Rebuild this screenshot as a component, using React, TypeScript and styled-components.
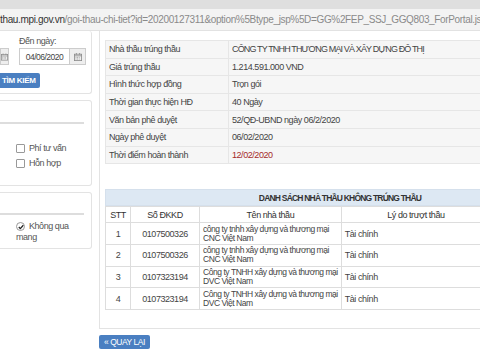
import React from "react";
import styled, { createGlobalStyle } from "styled-components";

const Global = createGlobalStyle`
  html, body { margin: 0; padding: 0; background: #fff; overflow: hidden; }
  body {
    width: 480px; height: 360px;
    font-family: "Liberation Sans", Arial, sans-serif;
    font-size: 9px;
    letter-spacing: -0.45px;
    color: #444;
  }
  * { box-sizing: border-box; }
`;

const Chrome = styled.div`
  height: 9px;
  background: #dfdfdf;
`;

const UrlBar = styled.div`
  height: 22px;
  background: #f3f3f3;
  border-bottom: 1px solid #e2e2e2;
  display: flex;
  align-items: center;
  white-space: nowrap;
  overflow: hidden;
  font-size: 10px;
  letter-spacing: -0.35px;
  color: #8a8a8a;
`;

const Host = styled.span`
  color: #333;
`;

const Page = styled.div`
  display: flex;
  gap: 7px;
  align-items: flex-start;
`;

const LeftCol = styled.div`
  width: 92px;
  flex: none;
  display: flex;
  flex-direction: column;
  gap: 6px;
`;

const Panel = styled.div<{ $h: number }>`
  height: ${(p) => p.$h}px;
  background: #fff;
  border: 1px solid #e3e3e3;
  border-left: none;
  border-radius: 0 3px 3px 0;
`;

const SearchPanel = styled(Panel)`
  border-top: none;
  padding-top: 4px;
`;

const FieldLabel = styled.div`
  color: #555;
  margin-left: 19px;
  height: 13px;
  line-height: 13px;
`;

const InputRow = styled.div`
  display: flex;
  height: 17px;
`;

const Addon = styled.div<{ $w: number }>`
  width: ${(p) => p.$w}px;
  height: 17px;
  background: #eee;
  border: 1px solid #ccc;
  display: flex;
  align-items: center;
  justify-content: center;
`;

const DateInput = styled.div`
  width: 50px;
  height: 17px;
  margin-left: 10px;
  border: 1px solid #ccc;
  border-right: none;
  font-size: 8.5px;
  letter-spacing: -0.5px;
  color: #444;
  display: flex;
  align-items: center;
  justify-content: center;
  background: #fff;
`;

const SearchButton = styled.div`
  margin-top: 8px;
  width: 40px;
  height: 15px;
  background: #4a7fc1;
  color: #fff;
  font-size: 8px;
  font-weight: bold;
  letter-spacing: -0.3px;
  display: flex;
  align-items: center;
  padding-left: 2px;
  white-space: nowrap;
  border-radius: 0 2px 2px 0;
`;

const Rule = styled.div<{ $top: number }>`
  margin-top: ${(p) => p.$top}px;
  width: 84px;
  height: 2px;
  background: #ddd;
`;

const CheckList = styled.div<{ $top: number }>`
  margin-top: ${(p) => p.$top}px;
  margin-left: 16px;
  display: flex;
  flex-direction: column;
  gap: 4px;
`;

const CheckRow = styled.div`
  display: flex;
  align-items: center;
  gap: 4px;
  color: #555;
  line-height: 11px;
  white-space: nowrap;
`;

const Box = styled.span`
  width: 9px;
  height: 9px;
  border: 1px solid #999;
  border-radius: 1px;
  background: #fff;
  flex: none;
`;

const Round = styled.span`
  width: 9px;
  height: 9px;
  border: 1px solid #999;
  border-radius: 50%;
  background: #fff;
  flex: none;
  display: flex;
  align-items: center;
  justify-content: center;
`;

const Wrap = styled.div`
  color: #555;
  line-height: 11px;
`;

const RightCol = styled.div`
  width: 480px;
  flex: none;
  display: flex;
  flex-direction: column;
`;

const RightPanel = styled.div`
  height: 298px;
  border: 1px solid #e3e3e3;
  border-top: none;
  background: #fff;
  padding: 9px 0 0 5px;
`;

const InfoTable = styled.table`
  width: 386px;
  border-collapse: collapse;
  color: #444;
  td {
    height: 17.6px;
    padding: 0 3px;
    background: #f6f6f6;
    border-top: 1px solid #e6e6e6;
    border-left: 1px solid #e6e6e6;
    border-bottom: 1px solid #e6e6e6;
    white-space: nowrap;
  }
  td:first-child { width: 123px; }
`;

const Caps = styled.span`
  letter-spacing: -0.85px;
`;

const Red = styled.span`
  color: #a52a2a;
`;

const ListTitle = styled.div`
  margin-top: 25px;
  width: 470px;
  height: 17px;
  background: #dde8f3;
  border: 1px solid #d5e0ec;
  font-size: 8.5px;
  font-weight: bold;
  letter-spacing: -0.8px;
  color: #333;
  display: flex;
  align-items: center;
  justify-content: center;
`;

const ListTable = styled.table`
  width: 386px;
  border-collapse: collapse;
  color: #444;
  th {
    height: 16px;
    font-weight: normal;
    border: 1px solid #ddd;
    text-align: center;
    color: #333;
  }
  td {
    height: 21.7px;
    border: 1px solid #ddd;
    padding: 0 3px;
    white-space: nowrap;
  }
`;

const NameCell = styled.td`
  font-size: 8.5px;
  line-height: 9px;
`;

const Center = styled.td`
  text-align: center;
`;

const BackButton = styled.div`
  margin-top: 6px;
  width: 51px;
  height: 14px;
  background: #4a7fc1;
  color: #fff;
  font-size: 8.5px;
  border-radius: 2px;
  display: flex;
  align-items: center;
  justify-content: center;
  white-space: nowrap;
  letter-spacing: -0.45px;
`;

const Cal = () => (
  <svg width="8" height="8" viewBox="0 0 10 10" fill="none" stroke="#888" strokeWidth="1">
    <rect x="0.5" y="1.5" width="9" height="8" />
    <line x1="0.5" y1="3.5" x2="9.5" y2="3.5" />
    <line x1="3" y1="0" x2="3" y2="2" />
    <line x1="7" y1="0" x2="7" y2="2" />
    <line x1="2" y1="5.5" x2="8" y2="5.5" strokeDasharray="1 1" />
    <line x1="2" y1="7.5" x2="8" y2="7.5" strokeDasharray="1 1" />
  </svg>
);

const Tick = () => (
  <svg width="6" height="6" viewBox="0 0 6 6" fill="none" stroke="#222" strokeWidth="1.3">
    <polyline points="0.8,3 2.3,4.6 5.3,1.2" />
  </svg>
);

const info: [string, React.ReactNode][] = [
  ["Nhà thầu trúng thầu", <Caps>CÔNG TY TNHH THƯƠNG MẠI VÀ XÂY DỰNG ĐÔ THỊ</Caps>],
  ["Giá trúng thầu", "1.214.591.000 VND"],
  ["Hình thức hợp đồng", "Trọn gói"],
  ["Thời gian thực hiện HĐ", "40 Ngày"],
  ["Văn bản phê duyệt", "52/QĐ-UBND ngày 06/2/2020"],
  ["Ngày phê duyệt", "06/02/2020"],
  ["Thời điểm hoàn thành", <Red>12/02/2020</Red>],
];

const rows = [
  ["1", "0107500326", "công ty tnhh xây dựng và thương mại", "CNC Việt Nam"],
  ["2", "0107500326", "công ty tnhh xây dựng và thương mại", "CNC Việt Nam"],
  ["3", "0107323194", "Công ty TNHH xây dựng và thương mại", "DVC Việt Nam"],
  ["4", "0107323194", "Công ty TNHH xây dựng và thương mại", "DVC Việt Nam"],
];

export default function App() {
  return (
    <>
      <Global />
      <Chrome />
      <UrlBar>
        <Host>thau.mpi.gov.vn</Host>/goi-thau-chi-tiet?id=20200127311&amp;option%5Btype_jsp%5D=GG%2FEP_SSJ_GGQ803_ForPortal.jsp&amp;option%5Bid%5D=
      </UrlBar>
      <Page>
        <LeftCol>
          <SearchPanel $h={63}>
            <FieldLabel>Đến ngày:</FieldLabel>
            <InputRow>
              <Addon $w={9}><Cal /></Addon>
              <DateInput>04/06/2020</DateInput>
              <Addon $w={17}><Cal /></Addon>
            </InputRow>
            <SearchButton>TÌM KIẾM</SearchButton>
          </SearchPanel>
          <Panel $h={86}>
            <Rule $top={21} />
            <CheckList $top={19}>
              <CheckRow><Box />Phí tư vấn</CheckRow>
              <CheckRow><Box />Hỗn hợp</CheckRow>
            </CheckList>
          </Panel>
          <Panel $h={57}>
            <Rule $top={20} />
            <CheckList $top={6}>
              <Wrap>
                <CheckRow><Round><Tick /></Round>Không qua</CheckRow>
                <span>mang</span>
              </Wrap>
            </CheckList>
          </Panel>
        </LeftCol>
        <RightCol>
          <RightPanel>
            <InfoTable>
              <tbody>
                {info.map(([k, v], i) => (
                  <tr key={i}>
                    <td>{k}</td>
                    <td>{v}</td>
                  </tr>
                ))}
              </tbody>
            </InfoTable>
            <ListTitle>DANH SÁCH NHÀ THẦU KHÔNG TRÚNG THẦU</ListTitle>
            <ListTable>
              <thead>
                <tr>
                  <th style={{ width: 25 }}>STT</th>
                  <th style={{ width: 69 }}>Số ĐKKD</th>
                  <th style={{ width: 141 }}>Tên nhà thầu</th>
                  <th>Lý do trượt thầu</th>
                </tr>
              </thead>
              <tbody>
                {rows.map((r) => (
                  <tr key={r[0]}>
                    <Center>{r[0]}</Center>
                    <Center>{r[1]}</Center>
                    <NameCell>{r[2]}<br />{r[3]}</NameCell>
                    <td>Tài chính</td>
                  </tr>
                ))}
              </tbody>
            </ListTable>
          </RightPanel>
          <BackButton>« QUAY LẠI</BackButton>
        </RightCol>
      </Page>
    </>
  );
}
